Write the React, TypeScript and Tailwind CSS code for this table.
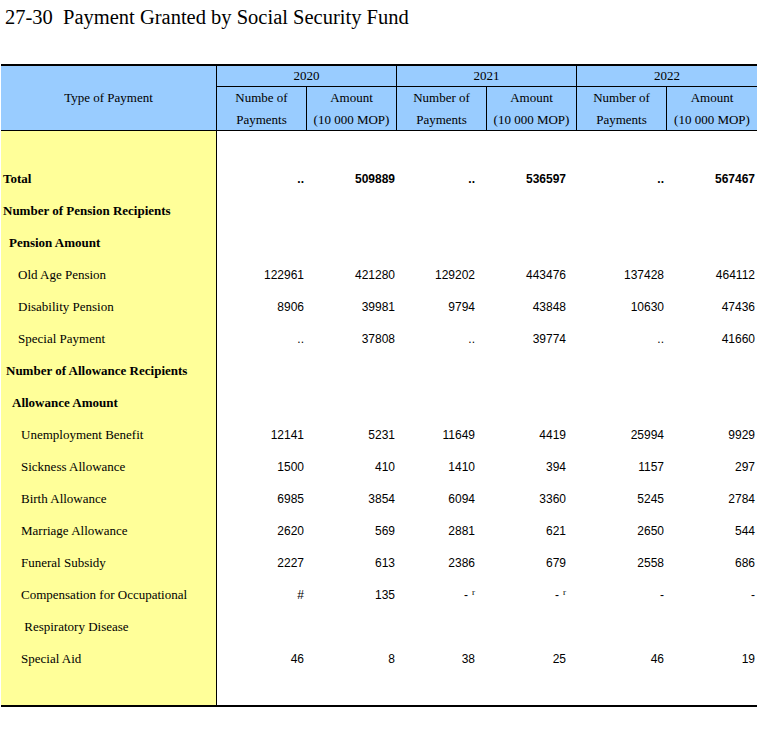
import clsx from "clsx";

type Row = {
  label: string;
  indent: string;
  bold?: boolean;
  values: string[];
};

const YEARS = ["2020", "2021", "2022"] as const;

// right padding of each number column, read off the reference
const CELL_PAD = ["pr-[3px]", "pr-[2px]", "pr-[12px]", "pr-[11px]", "pr-[3px]", "pr-[2px]"];

const ROWS: Row[] = [
  { label: "Total", indent: "pl-[2px]", bold: true, values: ["..", "509889", "..", "536597", "..", "567467"] },
  { label: "Number of Pension Recipients", indent: "pl-[2px]", bold: true, values: [] },
  { label: "Pension Amount", indent: "pl-[8px]", bold: true, values: [] },
  { label: "Old Age Pension", indent: "pl-[17px]", values: ["122961", "421280", "129202", "443476", "137428", "464112"] },
  { label: "Disability Pension", indent: "pl-[17px]", values: ["8906", "39981", "9794", "43848", "10630", "47436"] },
  { label: "Special Payment", indent: "pl-[17px]", values: ["..", "37808", "..", "39774", "..", "41660"] },
  { label: "Number of Allowance Recipients", indent: "pl-[5px]", bold: true, values: [] },
  { label: "Allowance Amount", indent: "pl-[11px]", bold: true, values: [] },
  { label: "Unemployment Benefit", indent: "pl-[20px]", values: ["12141", "5231", "11649", "4419", "25994", "9929"] },
  { label: "Sickness Allowance", indent: "pl-[20px]", values: ["1500", "410", "1410", "394", "1157", "297"] },
  { label: "Birth Allowance", indent: "pl-[20px]", values: ["6985", "3854", "6094", "3360", "5245", "2784"] },
  { label: "Marriage Allowance", indent: "pl-[20px]", values: ["2620", "569", "2881", "621", "2650", "544"] },
  { label: "Funeral Subsidy", indent: "pl-[20px]", values: ["2227", "613", "2386", "679", "2558", "686"] },
  { label: "Compensation for Occupational", indent: "pl-[20px]", values: ["#", "135", "-r", "-r", "-", "-"] },
  { label: " Respiratory Disease", indent: "pl-[20px]", values: [] },
  { label: "Special Aid", indent: "pl-[20px]", values: ["46", "8", "38", "25", "46", "19"] },
];

const Value = ({ v }: { v: string }) => {
  if (v === "-r") {
    return (
      <span>
        -
        <sup className="ml-[4px] font-['Liberation_Serif',serif] text-[9px]">r</sup>
      </span>
    );
  }
  return <span>{v}</span>;
};

export default function App() {
  return (
    <div className="h-[739px] w-[757px] bg-white text-black font-['Liberation_Serif','Times_New_Roman',serif]">
      <h1 className="h-[64px] whitespace-pre pl-[5px] pt-[7px] text-[20.5px] font-normal leading-[21px]">
        27-30  Payment Granted by Social Security Fund
      </h1>

      <div className="ml-px w-[756px] border-y-2 border-black">
        {/* header */}
        <div className="flex h-[65px] border-b border-black bg-[#99ccff] text-[13px]">
          <div className="flex w-[216px] items-center justify-center border-r border-black">
            Type of Payment
          </div>
          {YEARS.map((year, i) => (
            <div key={year} className={clsx("flex w-[180px] flex-col", i < 2 && "border-r border-black")}>
              <div className="flex h-[22px] items-center justify-center border-b border-black">{year}</div>
              <div className="flex flex-1 leading-[22px]">
                <div className="flex w-[90px] flex-col items-center justify-center border-r border-black">
                  <span>{i === 0 ? "Numbe of" : "Number of"}</span>
                  <span>Payments</span>
                </div>
                <div className="flex flex-1 flex-col items-center justify-center">
                  <span>Amount</span>
                  <span>(10 000 MOP)</span>
                </div>
              </div>
            </div>
          ))}
        </div>

        {/* body */}
        <div className="flex">
          <div className="w-[216px] border-r border-black bg-[#ffff99] text-[13px]">
            <div className="h-[32px]" />
            {ROWS.map((row) => (
              <div
                key={row.label}
                className={clsx("flex h-[32px] items-center whitespace-pre", row.indent, row.bold && "font-bold")}
              >
                {row.label}
              </div>
            ))}
            <div className="h-[30px]" />
          </div>

          <div className="flex-1 text-[12px] font-['Liberation_Sans',Arial,sans-serif]">
            <div className="h-[32px]" />
            {ROWS.map((row) => (
              <div
                key={row.label}
                className={clsx("grid h-[32px] grid-cols-6 items-center", row.bold && "font-bold")}
              >
                {row.values.map((v, j) => (
                  <div key={j} className={clsx("text-right", CELL_PAD[j])}>
                    <Value v={v} />
                  </div>
                ))}
              </div>
            ))}
            <div className="h-[30px]" />
          </div>
        </div>
      </div>
    </div>
  );
}
